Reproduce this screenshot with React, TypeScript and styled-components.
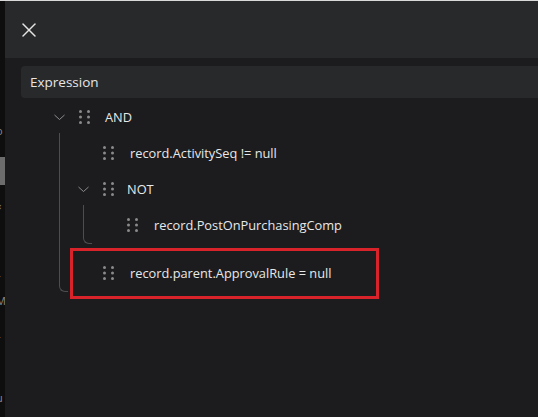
import React from 'react';
import styled, { createGlobalStyle } from 'styled-components';

const GlobalStyle = createGlobalStyle`
  html, body {
    margin: 0;
    padding: 0;
    background: #1c1c1e;
  }
  body {
    border-top: 1px solid #d9d9d9;
    font-family: 'Open Sans', 'Noto Sans', sans-serif;
    -webkit-font-smoothing: antialiased;
  }
`;

const Page = styled.div`
  display: flex;
  height: 416px;
  overflow: hidden;
`;

const BackStrip = styled.div`
  width: 5px;
  flex: none;
  background: #0e0e0f;
  display: flex;
  flex-direction: column;
  overflow: hidden;
  color: #8a8a8a;
  font-size: 11px;
  line-height: 12px;
`;

const StripGlyph = styled.span<{ $top: number }>`
  margin-top: ${(p) => p.$top}px;
  margin-left: -4px;
  white-space: nowrap;
`;

const StripBlock = styled.div`
  margin-top: 20px;
  height: 28px;
  background: #6c6c6c;
  flex: none;
`;

const Drawer = styled.div`
  flex: 1;
  display: flex;
  flex-direction: column;
  background: #1c1c1e;
`;

const Header = styled.div`
  height: 57px;
  flex: none;
  background: #28292b;
  display: flex;
  align-items: center;
  padding-left: 12px;
`;

const CloseButton = styled.button`
  width: 24px;
  height: 24px;
  padding: 0;
  border: none;
  background: transparent;
  color: #e4e4e4;
  display: flex;
  align-items: center;
  justify-content: center;
  cursor: pointer;
`;

const Content = styled.div`
  padding: 8px 0 0 16px;
  display: flex;
  flex-direction: column;
`;

const SectionBar = styled.div`
  height: 32px;
  background: #28292b;
  border-radius: 4px 0 0 4px;
  display: flex;
  align-items: center;
  padding-left: 9px;
  color: #e6e6e6;
  font-size: 13.5px;
`;

const Tree = styled.div`
  margin: 1px 0 0 33px;
  display: flex;
  flex-direction: column;
`;

const Row = styled.div<{ $highlight?: boolean }>`
  position: relative;
  height: 36px;
  display: flex;
  align-items: center;
  color: #e8e8e8;
  font-size: 12.8px;

  ${(p) =>
    p.$highlight &&
    `
    &::after {
      content: '';
      position: absolute;
      left: -8px;
      top: -7px;
      width: 309px;
      height: 51px;
      box-sizing: border-box;
      border: 3px solid #d8232a;
      pointer-events: none;
    }
  `}
`;

const ToggleSlot = styled.div`
  width: 25px;
  flex: none;
  display: flex;
  align-items: center;
  color: #8c8c8c;
`;

const Handle = styled.div`
  width: 11px;
  height: 14px;
  flex: none;
  display: flex;
  color: #8a8a8a;
`;

const Label = styled.span<{ $gap: number }>`
  margin-left: ${(p) => p.$gap}px;
  white-space: nowrap;
`;

const Group = styled.div<{ $nested?: boolean }>`
  display: flex;
  flex-direction: column;
  margin-bottom: ${(p) => (p.$nested ? 12 : 0)}px;
`;

const Children = styled.div`
  position: relative;
  margin-left: 24px;
  display: flex;
  flex-direction: column;

  &::before {
    content: '';
    position: absolute;
    left: -19px;
    top: -2px;
    bottom: -1px;
    width: 8px;
    border-left: 1px solid #4d4d4f;
    border-bottom: 1px solid #4d4d4f;
    border-bottom-left-radius: 6px;
  }
`;

const CloseIcon = () => (
  <svg width="24" height="24" viewBox="0 0 24 24" fill="none" stroke="currentColor" strokeWidth="1.5" strokeLinecap="round">
    <path d="M18 6 6 18" />
    <path d="m6 6 12 12" />
  </svg>
);

const Chevron = () => (
  <svg width="11" height="7" viewBox="0 0 11 7" fill="none" stroke="currentColor" strokeWidth="1">
    <path d="M0.5 1 5.5 5.5 10.5 1" />
  </svg>
);

const DragDots = () => (
  <svg width="11" height="14" viewBox="0 0 11 14" fill="currentColor">
    {[1.5, 7, 12.5].map((y) =>
      [1.5, 9.5].map((x) => <circle key={`${x}-${y}`} cx={x} cy={y} r="1.5" />)
    )}
  </svg>
);

type Node =
  | { kind: 'rule'; text: string; highlight?: boolean }
  | { kind: 'group'; op: string; children: Node[] };

const expression: Node = {
  kind: 'group',
  op: 'AND',
  children: [
    { kind: 'rule', text: 'record.ActivitySeq != null' },
    {
      kind: 'group',
      op: 'NOT',
      children: [{ kind: 'rule', text: 'record.PostOnPurchasingComp' }],
    },
    { kind: 'rule', text: 'record.parent.ApprovalRule = null', highlight: true },
  ],
};

const TreeNode = ({ node, nested }: { node: Node; nested?: boolean }) => {
  if (node.kind === 'rule') {
    return (
      <Row $highlight={node.highlight}>
        <ToggleSlot />
        <Handle>
          <DragDots />
        </Handle>
        <Label $gap={16}>{node.text}</Label>
      </Row>
    );
  }
  return (
    <Group $nested={nested}>
      <Row>
        <ToggleSlot>
          <Chevron />
        </ToggleSlot>
        <Handle>
          <DragDots />
        </Handle>
        <Label $gap={nested ? 13 : 15}>{node.op}</Label>
      </Row>
      <Children>
        {node.children.map((c, i) => (
          <TreeNode key={i} node={c} nested />
        ))}
      </Children>
    </Group>
  );
};

export default function App() {
  return (
    <>
      <GlobalStyle />
      <Page>
        <BackStrip>
          <StripGlyph $top={124}>o</StripGlyph>
          <StripBlock />
          <StripGlyph $top={15}>«</StripGlyph>
          <StripGlyph $top={60}>r</StripGlyph>
          <StripGlyph $top={11}>M</StripGlyph>
          <StripGlyph $top={26}>r</StripGlyph>
          <StripGlyph $top={13}>.</StripGlyph>
          <StripGlyph $top={22}>u</StripGlyph>
        </BackStrip>
        <Drawer>
          <Header>
            <CloseButton aria-label="Close">
              <CloseIcon />
            </CloseButton>
          </Header>
          <Content>
            <SectionBar>Expression</SectionBar>
            <Tree>
              <TreeNode node={expression} />
            </Tree>
          </Content>
        </Drawer>
      </Page>
    </>
  );
}
